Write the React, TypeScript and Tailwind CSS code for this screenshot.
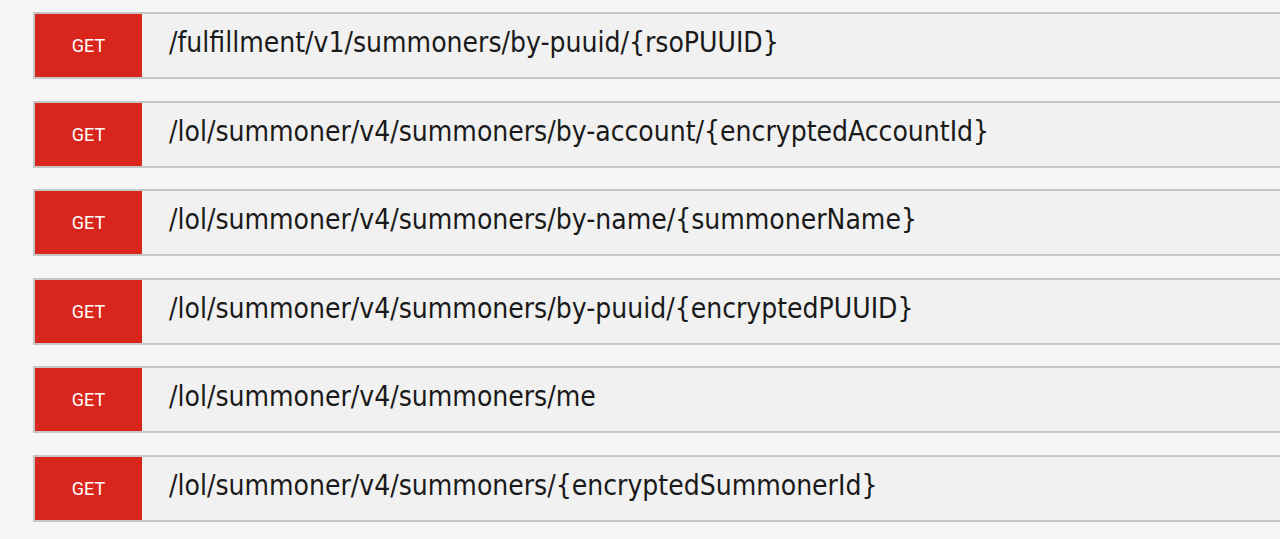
const endpoints = [
  '/fulfillment/v1/summoners/by-puuid/{rsoPUUID}',
  '/lol/summoner/v4/summoners/by-account/{encryptedAccountId}',
  '/lol/summoner/v4/summoners/by-name/{summonerName}',
  '/lol/summoner/v4/summoners/by-puuid/{encryptedPUUID}',
  '/lol/summoner/v4/summoners/me',
  '/lol/summoner/v4/summoners/{encryptedSummonerId}',
]

export default function App() {
  return (
    <div className="h-[539px] w-[1280px] overflow-hidden bg-[#f6f6f6] pl-[33px] pt-[12px]">
      <div className="flex flex-col gap-[21.6px]">
        {endpoints.map((path) => (
          <div
            key={path}
            className="-mr-[10px] flex h-[67px] items-stretch border-2 border-[#c6c6c6] bg-[#f1f1f1]"
          >
            <div className="flex w-[107px] shrink-0 items-center justify-center bg-[#d9261c] font-['Roboto',sans-serif] text-[18px] text-white">
              GET
            </div>
            <div className="flex items-center pb-[5px] pl-[27px] font-['DejaVu_Sans_Condensed','DejaVu_Sans',sans-serif] text-[28px] text-[#1a1a1a]">
              {path}
            </div>
          </div>
        ))}
      </div>
    </div>
  )
}
